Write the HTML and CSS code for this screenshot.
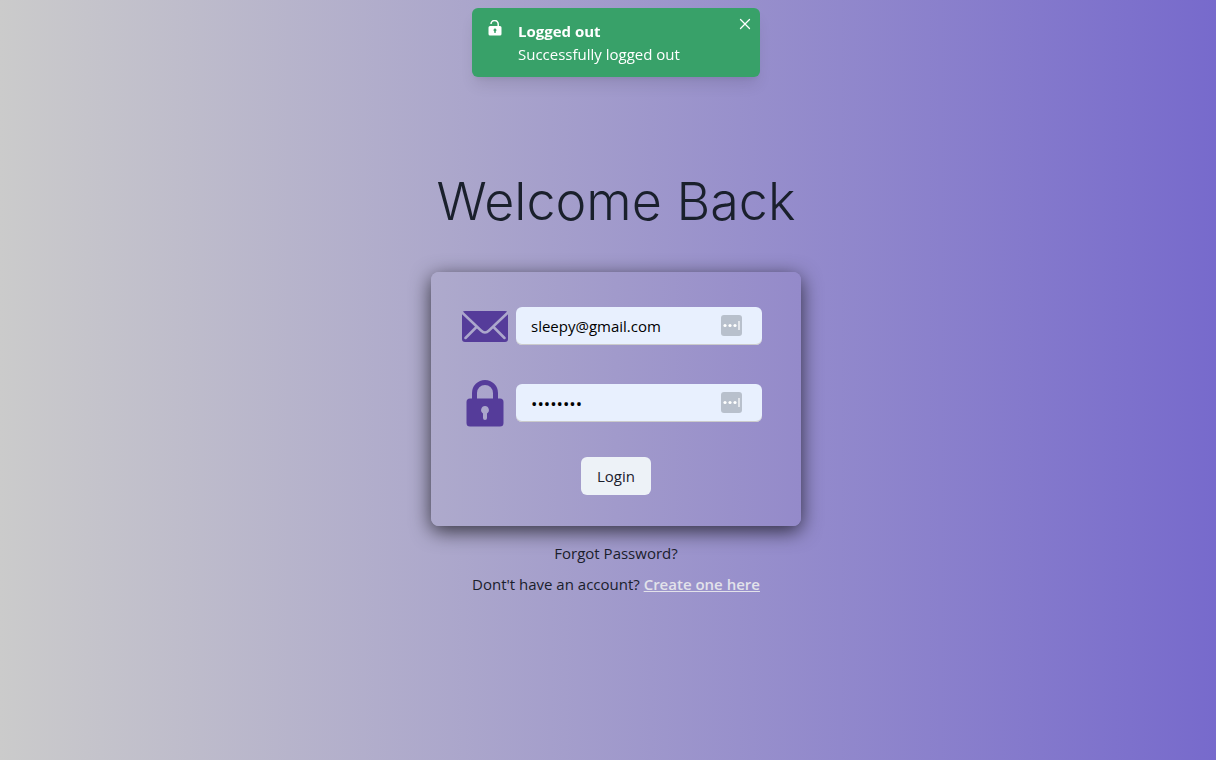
FILE: index.html
```html
<!DOCTYPE html>
<html lang="en">
<head>
<meta charset="utf-8">
<meta name="viewport" content="width=device-width, initial-scale=1">
<title>Welcome Back</title>
<link rel="stylesheet" href="styles.css">
</head>
<body>
<div class="toast-region">
  <div class="toast" role="status">
    <svg class="toast-icon" viewBox="0 0 14 16" aria-hidden="true">
      <path d="M3 4A3.600 3.600 0 0 1 10.200 4v3" fill="none" stroke="currentColor" stroke-width="1.500"/>
      <path fill="currentColor" fill-rule="evenodd" d="M2 6h10a1.500 1.500 0 0 1 1.500 1.500V14a1.500 1.500 0 0 1-1.500 1.500H2A1.500 1.500 0 0 1 .5 14V7.500A1.500 1.500 0 0 1 2 6zM7 8.600a1.500 1.500 0 0 0-.7 2.800V13h1.400v-1.600A1.500 1.500 0 0 0 7 8.600z"/>
    </svg>
    <div class="toast-body">
      <strong class="toast-title">Logged out</strong>
      <span>Successfully logged out</span>
    </div>
    <button class="toast-close" type="button" aria-label="Close">
      <svg viewBox="0 0 12 12" aria-hidden="true"><path d="M1.500 1.500l9 9M10.500 1.500l-9 9" stroke="currentColor" stroke-width="1.300" stroke-linecap="round"/></svg>
    </button>
  </div>
</div>
<main class="page">
  <h1 class="heading">Welcome Back</h1>
  <form class="card">
    <div class="fields">
      <div class="field">
        <label class="field-label" for="email" aria-label="Email">
          <svg class="mail" viewBox="0 0 46 31" aria-hidden="true">
            <rect width="46" height="31" rx="3" fill="currentColor"/>
            <path class="mail-line" d="M-.5 1L19 19.500q4 4 8 0L46.500 1M14.500 16L3.500 27M31.500 16l11 11"/>
          </svg>
        </label>
        <div class="control">
          <input class="input" id="email" type="email" value="sleepy@gmail.com">
          <svg class="manager" viewBox="0 0 21 21" aria-hidden="true"><rect width="21" height="21" rx="3" fill="#b8c0cc"/><g fill="#fff"><circle cx="4" cy="10.500" r="1.600"/><circle cx="9" cy="10.500" r="1.600"/><circle cx="14" cy="10.500" r="1.600"/><path opacity=".6" d="M17 6h2v9h-2z"/></g></svg>
        </div>
      </div>
      <div class="field">
        <label class="field-label" for="password" aria-label="Password">
          <svg class="lock" viewBox="0 0 38 47" aria-hidden="true">
            <path d="M8.500 20v-7a10.500 10.500 0 0 1 21 0v7" fill="none" stroke="currentColor" stroke-width="5"/>
            <path fill="currentColor" fill-rule="evenodd" d="M4 18.500h30a3.500 3.500 0 0 1 3.500 3.500v21a3.500 3.500 0 0 1-3.500 3.500H4A3.500 3.500 0 0 1 .5 43V22A3.500 3.500 0 0 1 4 18.500zM19 26a4 4 0 0 0-2 7.400V38a2 2 0 0 0 4 0v-4.600A4 4 0 0 0 19 26z"/>
          </svg>
        </label>
        <div class="control">
          <input class="input password" id="password" type="password" value="sleepy12">
          <svg class="manager" viewBox="0 0 21 21" aria-hidden="true"><rect width="21" height="21" rx="3" fill="#b8c0cc"/><g fill="#fff"><circle cx="4" cy="10.500" r="1.600"/><circle cx="9" cy="10.500" r="1.600"/><circle cx="14" cy="10.500" r="1.600"/><path opacity=".6" d="M17 6h2v9h-2z"/></g></svg>
        </div>
      </div>
    </div>
    <button class="login" type="submit">Login</button>
  </form>
  <a class="forgot" href="#forgot">Forgot Password?</a>
  <p class="signup">Dont't have an account? <a class="create" href="#create">Create one here</a></p>
</main>
</body>
</html>
```

FILE: styles.css
```css
* {
  box-sizing: border-box;
}

body {
  margin: 0;
  min-height: 100vh;
  color: #1a202c;
  background: linear-gradient(to right, #cbcbcb, #776acc);
  font: 15px/23px "Open Sans", "Noto Sans", sans-serif;
}

.toast-region {
  position: fixed;
  top: 8px;
  left: 16px;
  right: 0;
  display: flex;
  justify-content: center;
}

.toast {
  position: relative;
  display: flex;
  min-width: 288px;
  padding: 12px 16px 11px;
  color: #fff;
  background: #38a169;
  border-radius: 6px;
  box-shadow: 0 10px 15px -3px rgba(0, 0, 0, .1), 0 4px 6px -2px rgba(0, 0, 0, .05);
}

.toast-icon {
  width: 14px;
  height: 16px;
  margin-right: 16px;
}

.toast-body {
  display: flex;
  flex-direction: column;
}

.toast-title {
  font-weight: 700;
}

.toast-close {
  position: absolute;
  top: 4px;
  right: 4px;
  display: grid;
  place-items: center;
  width: 23px;
  height: 23px;
  padding: 0;
  color: inherit;
  background: none;
  border: 0;
}

.toast-close svg {
  width: 12px;
  height: 12px;
}

.page {
  display: flex;
  flex-direction: column;
  align-items: center;
  padding: 168px 0 32px 16px;
}

.heading {
  margin: 0 0 36px;
  font: 300 52px/68px Inter, "Open Sans", sans-serif;
}

.card {
  display: flex;
  flex-direction: column;
  align-items: center;
  gap: 35px;
  width: 100%;
  max-width: 370px;
  padding: 35px 31px 31px;
  border-radius: 8px;
  background: linear-gradient(to right, #aeaacc, #948aca);
  box-shadow: 0 5px 20px rgba(0, 0, 0, .7);
}

.fields {
  display: flex;
  flex-direction: column;
  gap: 39px;
  width: 100%;
  padding-right: 8px;
}

.field {
  display: flex;
  align-items: center;
  gap: 8px;
  height: 38px;
}

.field-label {
  display: grid;
  place-items: center;
  width: 46px;
  color: #553c9a;
}

.mail {
  width: 46px;
  height: 31px;
}

.mail-line {
  fill: none;
  stroke: #aca7cc;
  stroke-width: 2.5;
  stroke-linecap: round;
}

.lock {
  width: 38px;
  height: 47px;
}

.control {
  position: relative;
  flex: 1;
}

.input {
  display: block;
  width: 100%;
  height: 38px;
  padding: 0 48px 0 15px;
  color: #000;
  background: #e8f0fe;
  border: 0;
  border-radius: 6px;
  box-shadow: inset 0 -1px 0 #cbcbcb;
  font: inherit;
}

.password {
  font-size: 17px;
}

.manager {
  position: absolute;
  top: 8px;
  right: 20px;
  width: 21px;
  height: 21px;
}

.login {
  height: 38px;
  padding: 0 16px;
  color: #1a202c;
  background: #edf2f7;
  border: 0;
  border-radius: 6px;
  font: inherit;
  font-weight: 500;
}

.forgot {
  margin: 16px 0 8px;
  color: inherit;
  font-weight: 500;
  text-decoration: none;
}

.signup {
  margin: 0;
}

.create {
  color: #e2e2ea;
  font-weight: 600;
}
```
